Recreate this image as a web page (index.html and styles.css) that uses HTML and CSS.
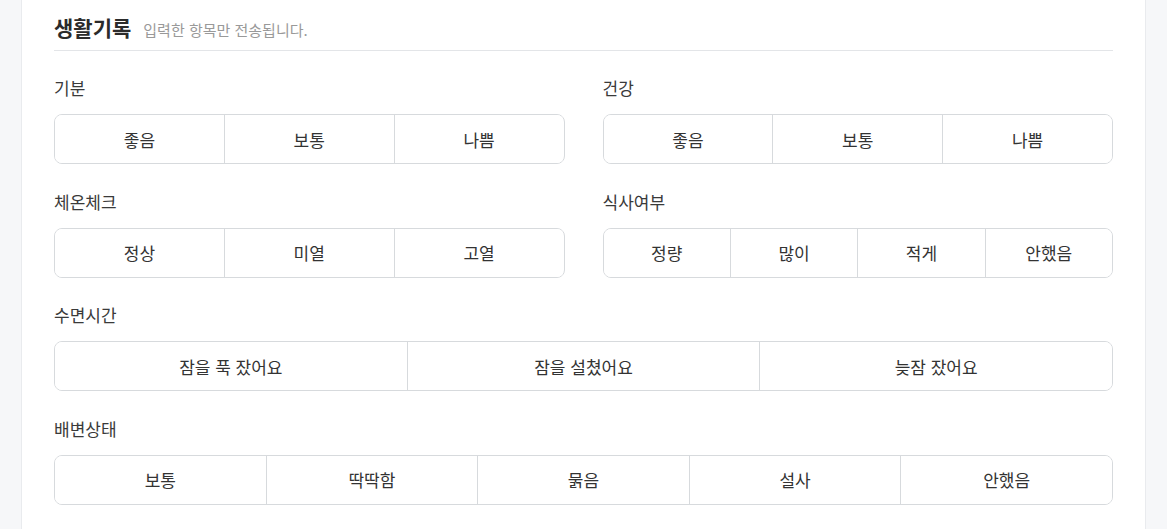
FILE: index.html
```html
<!DOCTYPE html>
<html lang="ko">
<head>
<meta charset="utf-8">
<title>생활기록</title>
<link rel="stylesheet" href="styles.css">
</head>
<body>
<div class="page">
  <section class="card">
    <header class="card-head">
      <h2 class="card-title">생활기록</h2>
      <span class="card-sub">입력한 항목만 전송됩니다.</span>
    </header>
    <div class="fields">
      <div class="field">
        <div class="field-label">기분</div>
        <div class="seg">
          <button class="seg-btn">좋음</button>
          <button class="seg-btn">보통</button>
          <button class="seg-btn">나쁨</button>
        </div>
      </div>
      <div class="field">
        <div class="field-label">건강</div>
        <div class="seg">
          <button class="seg-btn">좋음</button>
          <button class="seg-btn">보통</button>
          <button class="seg-btn">나쁨</button>
        </div>
      </div>
      <div class="field">
        <div class="field-label">체온체크</div>
        <div class="seg">
          <button class="seg-btn">정상</button>
          <button class="seg-btn">미열</button>
          <button class="seg-btn">고열</button>
        </div>
      </div>
      <div class="field">
        <div class="field-label">식사여부</div>
        <div class="seg">
          <button class="seg-btn">정량</button>
          <button class="seg-btn">많이</button>
          <button class="seg-btn">적게</button>
          <button class="seg-btn">안했음</button>
        </div>
      </div>
      <div class="field field-wide">
        <div class="field-label">수면시간</div>
        <div class="seg">
          <button class="seg-btn">잠을 푹 잤어요</button>
          <button class="seg-btn">잠을 설쳤어요</button>
          <button class="seg-btn">늦잠 잤어요</button>
        </div>
      </div>
      <div class="field field-wide">
        <div class="field-label">배변상태</div>
        <div class="seg">
          <button class="seg-btn">보통</button>
          <button class="seg-btn">딱딱함</button>
          <button class="seg-btn">묽음</button>
          <button class="seg-btn">설사</button>
          <button class="seg-btn">안했음</button>
        </div>
      </div>
    </div>
  </section>
</div>
</body>
</html>
```
FILE: styles.css
```css
* { box-sizing: border-box; }

html, body {
  margin: 0;
  padding: 0;
  background: #f6f7f9;
  font-family: "Noto Sans CJK KR", "Noto Sans", sans-serif;
  color: #333;
}

.page {
  padding-left: 21px;
  height: 529px;
  overflow: hidden;
}

.card {
  width: 1125px;
  min-height: 529px;
  background: #fff;
  border-left: 1px solid #e9ebee;
  border-right: 1px solid #e9ebee;
  padding: 0 32px;
}

.card-head {
  display: flex;
  align-items: baseline;
  gap: 12px;
  padding-top: 13px;
  padding-bottom: 9px;
  border-bottom: 1px solid #e3e5e8;
}

.card-title {
  margin: 0;
  font-size: 21px;
  line-height: 28px;
  font-weight: 700;
  color: #2b2b2b;
}

.card-sub {
  font-size: 15px;
  line-height: 20px;
  color: #999;
}

.fields {
  display: grid;
  grid-template-columns: 1fr 1fr;
  column-gap: 38px;
  row-gap: 27.6px;
  margin-top: 27px;
}

.field-wide { grid-column: 1 / -1; }

.field-label {
  font-size: 17px;
  line-height: 20px;
  color: #3a3a3a;
  margin-bottom: 16px;
}

.seg {
  display: flex;
  height: 50px;
  border: 1px solid #d7dadd;
  border-radius: 8px;
  overflow: hidden;
  background: #fff;
}

.seg-btn {
  flex: 1 1 0;
  min-width: 0;
  border: 0;
  background: #fff;
  font-family: inherit;
  font-size: 17px;
  color: #333;
  padding: 0;
  cursor: pointer;
}

.seg-btn + .seg-btn {
  border-left: 1px solid #d7dadd;
}
```
